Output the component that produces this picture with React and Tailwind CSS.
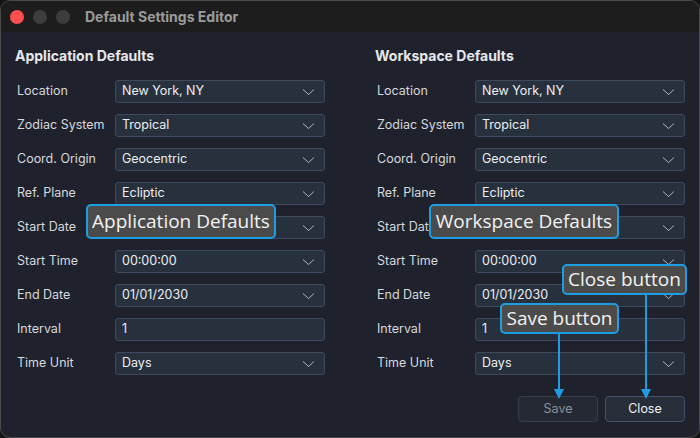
import React from 'react';

const rows = [
  { label: 'Location', value: 'New York, NY', select: true },
  { label: 'Zodiac System', value: 'Tropical', select: true },
  { label: 'Coord. Origin', value: 'Geocentric', select: true },
  { label: 'Ref. Plane', value: 'Ecliptic', select: true },
  { label: 'Start Date', value: '01/01/2024', select: true },
  { label: 'Start Time', value: '00:00:00', select: true },
  { label: 'End Date', value: '01/01/2030', select: true },
  { label: 'Interval', value: '1', select: false },
  { label: 'Time Unit', value: 'Days', select: true },
];

const Chevron = () => (
  <svg width="13" height="8" viewBox="0 0 13 8" fill="none" className="shrink-0">
    <path d="M1 1.5 L6.5 6.5 L12 1.5" stroke="#aeb2ba" strokeWidth="1" />
  </svg>
);

const Field = ({ label, value, select }) => (
  <div className="flex items-center">
    <div className="ml-[2px] w-[98px] text-[12.5px] text-[#d6d8dc]">{label}</div>
    <div className="flex h-[23px] w-[210px] items-center justify-between rounded-[3px] border border-[#3f4a5f] bg-[#27303d] pl-[6px] pr-[9px] text-[12.5px] text-[#eceef1]">
      <span>{value}</span>
      {select && <Chevron />}
    </div>
  </div>
);

const Column = ({ title }) => (
  <div className="w-[310px]">
    <h2 className="text-[14px] font-bold leading-[20px] text-[#e6e7ea]">{title}</h2>
    <div className="mt-[14px] flex flex-col gap-[11px]">
      {rows.map((r) => (
        <Field key={r.label} {...r} />
      ))}
    </div>
  </div>
);

const Callout = ({ text, className }) => (
  <div
    className={`absolute flex items-center justify-center rounded-[5px] border-2 border-[#1f9de2] bg-[#4b4b4b] text-[#f2f2f2] ${className}`}
    style={{ fontFamily: '"Open Sans", "Noto Sans", sans-serif' }}
  >
    {text}
  </div>
);

const Arrow = ({ x, y1, y2 }) => (
  <svg className="absolute left-0 top-0" width="700" height="438" style={{ pointerEvents: 'none' }}>
    <line x1={x} y1={y1} x2={x} y2={y2 - 8} stroke="#1f9de2" strokeWidth="2" />
    <polygon points={`${x - 5},${y2 - 10} ${x + 5},${y2 - 10} ${x},${y2}`} fill="#1f9de2" />
  </svg>
);

export default function App() {
  return (
    <div className="h-[438px] w-[700px] bg-[#141414]" style={{ fontFamily: 'Inter, "Liberation Sans", sans-serif' }}>
      <div className="relative flex h-full w-full flex-col overflow-hidden rounded-[10px] border border-[#4a4a4a] bg-[#1f222c]">
        <div className="flex h-[31px] shrink-0 items-center bg-[#1d1d1d] pl-[9px]">
          <div className="flex gap-[9px]">
            <span className="h-[14px] w-[14px] rounded-full bg-[#fe4f4f]" />
            <span className="h-[14px] w-[14px] rounded-full bg-[#3d3d3d]" />
            <span className="h-[14px] w-[14px] rounded-full bg-[#3d3d3d]" />
          </div>
          <span className="ml-[15px] text-[14px] font-bold text-[#9b9b9b]">Default Settings Editor</span>
        </div>

        <div className="flex gap-[50px] pl-[14px] pt-[14px]">
          <Column title="Application Defaults" />
          <Column title="Workspace Defaults" />
        </div>

        <div className="mt-[21px] flex justify-end gap-[7px] pr-[14px]">
          <button className="h-[26px] w-[80px] rounded-[4px] border border-[#363d4b] bg-[#242934] text-[12.5px] text-[#8b909a]">
            Save
          </button>
          <button className="h-[26px] w-[80px] rounded-[4px] border border-[#46506a] bg-[#272d39] text-[12.5px] text-[#f0f1f3]">
            Close
          </button>
        </div>

        <Arrow x={558} y1={333} y2={398} />
        <Arrow x={645} y1={293} y2={398} />

        <Callout text="Application Defaults" className="left-[85px] top-[203px] h-[35px] w-[190px] text-[19px]" />
        <Callout text="Workspace Defaults" className="left-[428px] top-[203px] h-[35px] w-[190px] text-[19px]" />
        <Callout text="Close button" className="left-[561px] top-[263px] h-[31px] w-[125px] text-[19px]" />
        <Callout text="Save button" className="left-[499px] top-[302px] h-[31px] w-[119px] text-[19px]" />
      </div>
    </div>
  );
}
